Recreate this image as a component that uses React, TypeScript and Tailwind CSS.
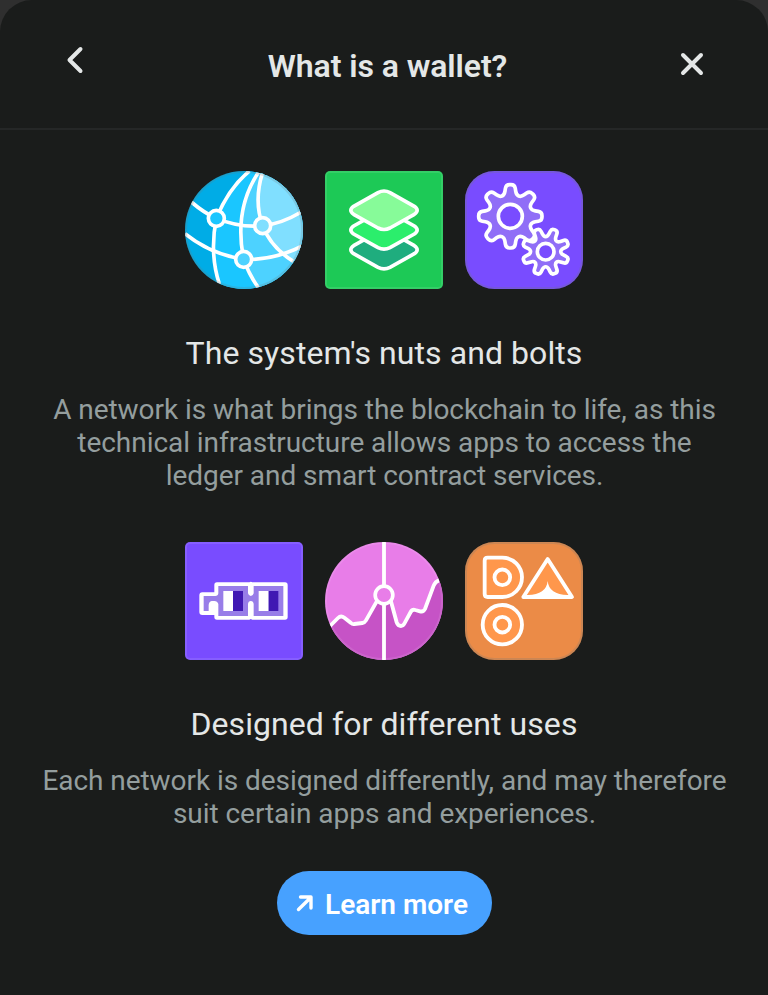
import React from "react";

type Point = [number, number];

// Closed polygon whose corners are softened with quadratic curves.
function roundedPolygon(points: Point[], radius: number): string {
  const n = points.length;
  const parts: string[] = [];
  for (let i = 0; i < n; i++) {
    const prev = points[(i + n - 1) % n];
    const cur = points[i];
    const next = points[(i + 1) % n];
    const toward = (target: Point): Point => {
      const dx = target[0] - cur[0];
      const dy = target[1] - cur[1];
      const len = Math.hypot(dx, dy);
      const t = Math.min(radius, len / 2) / len;
      return [cur[0] + dx * t, cur[1] + dy * t];
    };
    const a = toward(prev);
    const b = toward(next);
    parts.push(`${i === 0 ? "M" : "L"}${a[0].toFixed(2)} ${a[1].toFixed(2)}`);
    parts.push(`Q${cur[0].toFixed(2)} ${cur[1].toFixed(2)} ${b[0].toFixed(2)} ${b[1].toFixed(2)}`);
  }
  return parts.join("") + "Z";
}

function gear(cx: number, cy: number, offset: number, tip: number, tipHalf: number, root: number, rootHalf: number, radius: number) {
  const points: Point[] = [];
  for (let i = 0; i < 8; i++) {
    const a = ((offset + i * 45) * Math.PI) / 180;
    const at = (r: number, t: number): Point => [
      cx + Math.cos(a) * r - Math.sin(a) * t,
      cy + Math.sin(a) * r + Math.cos(a) * t,
    ];
    points.push(at(root, -rootHalf), at(tip, -tipHalf), at(tip, tipHalf), at(root, rootHalf));
  }
  return roundedPolygon(points, radius);
}

const BIG_GEAR = gear(151, 151, 0, 95, 13, 64, 18, 11);
const SMALL_GEAR = gear(257, 257, 22.5, 71, 10, 44, 12, 9);

function Tile({ children }: { children: React.ReactNode }) {
  return (
    <svg className="block size-[118px]" viewBox="15 15 354 354" fill="none">
      {children}
    </svg>
  );
}

function NetworkIcon() {
  return (
    <Tile>
      <clipPath id="globe">
        <circle cx="192" cy="192" r="177" />
      </clipPath>
      <g clipPath="url(#globe)">
        <path fill="#00ACE6" d="M15 15H369V369H15Z" />
        <path fill="#1AC6FF" d="M208 15Q145 68 109 157Q90 262 120 354V369H369V15Z" />
        <path fill="#4DD2FF" d="M234 22C187 91 171 180 191 280Q207 326 235 365H369V15Z" />
        <path fill="#80DFFF" d="M247 15C229 80 230 130 248 179Q272 244 340 286L369 270V15Z" />
        <g stroke="#fff" strokeWidth="11">
          <path d="M208 15Q145 68 109 157Q88 262 118 354" />
          <path d="M236 18C187 91 171 180 191 280Q207 326 235 365" />
          <path d="M247 22C229 80 230 130 248 179Q272 244 340 286" />
          <path d="M34 108Q74 142 109 157Q180 186 248 179Q303 174 364 138" />
          <path d="M15 203Q92 265 191 280Q280 284 369 239" />
        </g>
        <circle cx="109" cy="157" r="24" fill="#1AC6FF" stroke="#fff" strokeWidth="11" />
        <circle cx="248" cy="179" r="24" fill="#80DFFF" stroke="#fff" strokeWidth="11" />
        <circle cx="191" cy="280" r="24" fill="#4DD2FF" stroke="#fff" strokeWidth="11" />
      </g>
      <circle cx="192" cy="192" r="174" stroke="#6E7777" strokeOpacity=".22" strokeWidth="6" />
    </Tile>
  );
}

function LayersIcon() {
  const layer =
    "M174 80Q192 70 210 80L283 121Q300 133 283 145L210 186Q192 195 174 186L101 145Q84 133 101 121Z";
  return (
    <Tile>
      <rect x="15" y="15" width="354" height="354" rx="15" fill="#1DC956" />
      <g stroke="#fff" strokeWidth="11">
        <path d={layer} transform="translate(0 118)" fill="#1FAD7E" />
        <path d={layer} transform="translate(0 59)" fill="#2BEE6C" />
        <path d={layer} fill="#87FB99" />
      </g>
      <rect x="18" y="18" width="348" height="348" rx="12" stroke="#fff" strokeOpacity=".1" strokeWidth="6" />
    </Tile>
  );
}

function GearsIcon() {
  return (
    <Tile>
      <rect x="15" y="15" width="354" height="354" rx="88" fill="#794CFF" />
      <g stroke="#fff" strokeWidth="11" strokeLinejoin="round">
        <path d={BIG_GEAR} fill="#906EF7" />
        <circle cx="151" cy="151" r="36" fill="#794CFF" />
        <path d={SMALL_GEAR} fill="#906EF7" />
        <circle cx="257" cy="257" r="25" fill="#794CFF" />
      </g>
      <rect x="18" y="18" width="348" height="348" rx="85" stroke="#6E7777" strokeOpacity=".25" strokeWidth="6" />
    </Tile>
  );
}

function GlassesIcon() {
  return (
    <Tile>
      <rect x="15" y="15" width="354" height="354" rx="15" fill="#794CFF" />
      <path
        fill="#fff"
        d="M111 136H208L212.500 134L217 136H315Q323 136 323 144V240Q323 248 315 248H217L212.500 246L208 248H111Q103 248 103 240V234H67Q58 234 58 225V175Q58 166 67 166H103V144Q103 136 111 136Z"
      />
      <path
        fill="#987DE8"
        d="M115 147H204V169Q206 177 212.500 177T221 169V147H310V237H221V201Q220 192 212.500 192T204 201V237H115V201Q112 192 103 192H95Q86 194 86 205V222H71V177H106Q114 177 115 169Z"
      />
      <path fill="#fff" d="M130 162H160V222H130ZM236 162H266V222H236Z" />
      <path fill="#4018B3" d="M159 162H189V222H159ZM266 162H295V222H266Z" />
      <rect x="18" y="18" width="348" height="348" rx="12" stroke="#fff" strokeOpacity=".1" strokeWidth="6" />
    </Tile>
  );
}

function ChartIcon() {
  return (
    <Tile>
      <clipPath id="disc">
        <circle cx="192" cy="192" r="177" />
      </clipPath>
      <circle cx="192" cy="192" r="177" fill="#E87DE8" />
      <g clipPath="url(#disc)">
        <path
          fill="#C653C6"
          d="M30 267L54 243Q63 234 73 242L93 258Q97 262 103 261L127 258Q134 257 138 250L172 190H212L230 256Q234 267 243 267Q249 267 253 260L272 225Q277 216 286 219L300 223Q310 226 315 216L341 146Q346 133 357 130L369 125V369H15Z"
        />
        <circle cx="192" cy="192" r="174" stroke="#fff" strokeOpacity=".1" strokeWidth="6" />
        <path
          stroke="#fff"
          strokeWidth="11.500"
          d="M30 267L54 243Q63 234 73 242L93 258Q97 262 103 261L127 258Q134 257 138 250L172 190M212 190L230 256Q234 267 243 267Q249 267 253 260L272 225Q277 216 286 219L300 223Q310 226 315 216L341 146Q346 133 357 130M192 15V145M192 202V369"
        />
        <circle cx="192" cy="174" r="26.500" fill="#E87DE8" stroke="#fff" strokeWidth="11" />
      </g>
    </Tile>
  );
}

function DaoIcon() {
  return (
    <Tile>
      <rect x="15" y="15" width="354" height="354" rx="88" fill="#EB8B47" />
      <g fill="#FF974C" stroke="#fff" strokeWidth="11.500" strokeLinejoin="round">
        <path d="M83 62H127A59 59 0 0 1 127 180H83Q74 180 74 171V71Q74 62 83 62Z" />
        <circle cx="127" cy="121" r="23.500" />
        <circle cx="127" cy="263" r="59" />
        <circle cx="127" cy="263" r="23.500" />
        <path d="M263 66L336 180H190Z" />
      </g>
      <path fill="#fff" d="M203 174Q259 173 263 132Q267 173 323 174V181H203Z" />
      <rect x="18" y="18" width="348" height="348" rx="85" stroke="#6E7777" strokeOpacity=".25" strokeWidth="6" />
    </Tile>
  );
}

function Section({ title, lines, className, children }: { title: string; lines: string[]; className: string; children: React.ReactNode }) {
  return (
    <section className={`flex flex-col items-center ${className}`}>
      <div className="flex gap-[22px]">{children}</div>
      <h2 className="mt-[45px] text-[32px] leading-[38px] font-normal tracking-[0.08px] whitespace-nowrap text-[#E4E7E7]">{title}</h2>
      <p className="mt-[21px] pl-px text-center text-[28px] leading-[33px] tracking-[-0.05px] whitespace-nowrap text-[#949E9E]">
        {lines.map((line) => (
          <span key={line} className="block">{line}</span>
        ))}
      </p>
    </section>
  );
}

export default function App() {
  return (
    <div className="h-[995px] w-[768px] overflow-hidden bg-[#2F2F2F] font-['Roboto',sans-serif]">
      <main className="flex h-full flex-col items-center rounded-t-[32px] bg-[#1A1C1B]">
        <header className="flex h-[130px] w-full shrink-0 items-start justify-between border-b-2 border-[#252727] pr-[60px] pl-[63px]">
          <button aria-label="Back" className="mt-[44px]">
            <svg className="block h-8 w-6" viewBox="0 0 24 32" fill="none" stroke="#E4E7E7" strokeWidth="4" strokeLinecap="round" strokeLinejoin="round">
              <path d="M17.500 5L6.500 16L17.500 27" />
            </svg>
          </button>
          <h1 className="mt-[47px] ml-3 text-[32px] leading-[38px] font-semibold tracking-[-0.08px] text-[#E4E7E7]">What is a wallet?</h1>
          <button aria-label="Close" className="mt-[48px]">
            <svg className="block size-8" viewBox="0 0 32 32" fill="none" stroke="#E4E7E7" strokeWidth="4" strokeLinecap="round">
              <path d="M7 7L25 25M25 7L7 25" />
            </svg>
          </button>
        </header>
        <Section
          className="mt-[41px]"
          title="The system's nuts and bolts"
          lines={[
            "A network is what brings the blockchain to life, as this",
            "technical infrastructure allows apps to access the",
            "ledger and smart contract services.",
          ]}
        >
          <NetworkIcon />
          <LayersIcon />
          <GearsIcon />
        </Section>
        <Section
          className="mt-[50px]"
          title="Designed for different uses"
          lines={["Each network is designed differently, and may therefore", "suit certain apps and experiences."]}
        >
          <GlassesIcon />
          <ChartIcon />
          <DaoIcon />
        </Section>
        <button className="mt-[41px] flex h-16 w-[215px] shrink-0 items-center rounded-full bg-[#47A1FF] pl-[18px] text-white">
          <svg className="block size-5 shrink-0" viewBox="0 0 20 20" fill="none" stroke="#fff" strokeWidth="3.400" strokeLinecap="round" strokeLinejoin="round">
            <path d="M3.500 16.500L16 4.300M5.500 4H16V15" />
          </svg>
          <span className="mt-[3px] ml-[10.5px] text-[28px] leading-8 font-semibold whitespace-nowrap">Learn more</span>
        </button>
      </main>
    </div>
  );
}
